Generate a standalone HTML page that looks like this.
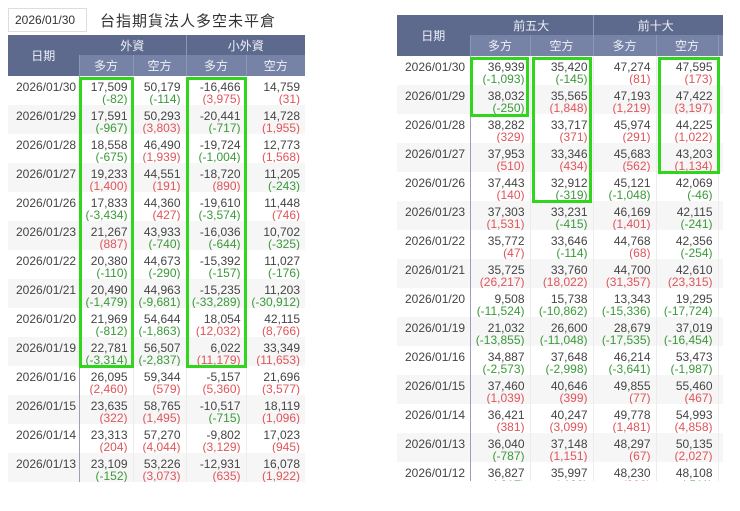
<!DOCTYPE html>
<html><head><meta charset="utf-8">
<style>
*{margin:0;padding:0;box-sizing:border-box}
body{width:740px;height:511px;background:#fff;position:relative;overflow:hidden;font-family:"Liberation Sans","Noto Sans CJK TC",sans-serif;color:#444}
table{border-collapse:collapse;table-layout:fixed;position:absolute;font-size:12px}
th{color:#eef0f6;font-weight:normal;font-size:12px;text-align:center;padding:0}
tr.h1 th{background:#5d6a8e;height:20px}
tr.h2 th{background:#7683a6;height:21px;border-left:1px solid #8c97b6}
th.d{background:#5d6a8e}
td{height:29px;vertical-align:top;padding:5px 5px 0 0;text-align:right;line-height:12px;border-left:1px solid #ececec;white-space:nowrap;overflow:hidden}
td.d{text-align:left;padding-left:8px;border-left:none;border-right:1px solid #9aa0bb}
tr.g td{background:#f6f6f7}
.r{color:#e0555a}.n{color:#3a9a38}
.box{position:absolute;border:3px solid #2fd61c}
.inp{position:absolute;left:8px;top:8px;width:79px;height:24px;border:1px solid #ddd;font-size:12px;padding:4px 0 0 6px;color:#333}
.tt{position:absolute;left:100px;top:10px;font-size:15px;color:#333;letter-spacing:1px}
</style></head><body>
<div class="inp">2026/01/30</div>
<div class="tt">台指期貨法人多空未平倉</div>

<table style="left:8px;top:35px;width:297px">
<colgroup><col style="width:71px"><col style="width:54px"><col style="width:53px"><col style="width:60px"><col style="width:59px"></colgroup>
<tr class="h1"><th class="d" rowspan="2">日期</th><th colspan="2">外資</th><th colspan="2" style="border-left:1px solid #8c97b6">小外資</th></tr>
<tr class="h2"><th>多方</th><th>空方</th><th>多方</th><th>空方</th></tr>
<tr><td class="d">2026/01/30</td><td>17,509<br><span class="n">(-82)</span></td><td>50,179<br><span class="n">(-114)</span></td><td>-16,466<br><span class="r">(3,975)</span></td><td>14,759<br><span class="r">(31)</span></td></tr>
<tr class="g"><td class="d">2026/01/29</td><td>17,591<br><span class="n">(-967)</span></td><td>50,293<br><span class="r">(3,803)</span></td><td>-20,441<br><span class="n">(-717)</span></td><td>14,728<br><span class="r">(1,955)</span></td></tr>
<tr><td class="d">2026/01/28</td><td>18,558<br><span class="n">(-675)</span></td><td>46,490<br><span class="r">(1,939)</span></td><td>-19,724<br><span class="n">(-1,004)</span></td><td>12,773<br><span class="r">(1,568)</span></td></tr>
<tr class="g"><td class="d">2026/01/27</td><td>19,233<br><span class="r">(1,400)</span></td><td>44,551<br><span class="r">(191)</span></td><td>-18,720<br><span class="r">(890)</span></td><td>11,205<br><span class="n">(-243)</span></td></tr>
<tr><td class="d">2026/01/26</td><td>17,833<br><span class="n">(-3,434)</span></td><td>44,360<br><span class="r">(427)</span></td><td>-19,610<br><span class="n">(-3,574)</span></td><td>11,448<br><span class="r">(746)</span></td></tr>
<tr class="g"><td class="d">2026/01/23</td><td>21,267<br><span class="r">(887)</span></td><td>43,933<br><span class="n">(-740)</span></td><td>-16,036<br><span class="n">(-644)</span></td><td>10,702<br><span class="n">(-325)</span></td></tr>
<tr><td class="d">2026/01/22</td><td>20,380<br><span class="n">(-110)</span></td><td>44,673<br><span class="n">(-290)</span></td><td>-15,392<br><span class="n">(-157)</span></td><td>11,027<br><span class="n">(-176)</span></td></tr>
<tr class="g"><td class="d">2026/01/21</td><td>20,490<br><span class="n">(-1,479)</span></td><td>44,963<br><span class="n">(-9,681)</span></td><td>-15,235<br><span class="n">(-33,289)</span></td><td>11,203<br><span class="n">(-30,912)</span></td></tr>
<tr><td class="d">2026/01/20</td><td>21,969<br><span class="n">(-812)</span></td><td>54,644<br><span class="n">(-1,863)</span></td><td>18,054<br><span class="r">(12,032)</span></td><td>42,115<br><span class="r">(8,766)</span></td></tr>
<tr class="g"><td class="d">2026/01/19</td><td>22,781<br><span class="n">(-3,314)</span></td><td>56,507<br><span class="n">(-2,837)</span></td><td>6,022<br><span class="r">(11,179)</span></td><td>33,349<br><span class="r">(11,653)</span></td></tr>
<tr><td class="d">2026/01/16</td><td>26,095<br><span class="r">(2,460)</span></td><td>59,344<br><span class="r">(579)</span></td><td>-5,157<br><span class="r">(5,360)</span></td><td>21,696<br><span class="r">(3,577)</span></td></tr>
<tr class="g"><td class="d">2026/01/15</td><td>23,635<br><span class="r">(322)</span></td><td>58,765<br><span class="r">(1,495)</span></td><td>-10,517<br><span class="n">(-715)</span></td><td>18,119<br><span class="r">(1,096)</span></td></tr>
<tr><td class="d">2026/01/14</td><td>23,313<br><span class="r">(204)</span></td><td>57,270<br><span class="r">(4,044)</span></td><td>-9,802<br><span class="r">(3,129)</span></td><td>17,023<br><span class="r">(945)</span></td></tr>
<tr class="g"><td class="d">2026/01/13</td><td>23,109<br><span class="n">(-152)</span></td><td>53,226<br><span class="r">(3,073)</span></td><td>-12,931<br><span class="r">(635)</span></td><td>16,078<br><span class="r">(1,922)</span></td></tr>
</table>

<div style="position:absolute;left:397px;top:15px;width:326px;height:466px;overflow:hidden">
<table style="left:0;top:0;width:326px">
<colgroup><col style="width:73px"><col style="width:60px"><col style="width:63px"><col style="width:63px"><col style="width:62px"><col style="width:5px"></colgroup>
<tr class="h1"><th class="d" rowspan="2">日期</th><th colspan="2">前五大</th><th colspan="2" style="border-left:1px solid #8c97b6">前十大</th><th style="background:#5d6a8e"></th></tr>
<tr class="h2"><th>多方</th><th>空方</th><th>多方</th><th>空方</th><th></th></tr>
<tr><td class="d">2026/01/30</td><td>36,939<br><span class="n">(-1,093)</span></td><td>35,420<br><span class="n">(-145)</span></td><td>47,274<br><span class="r">(81)</span></td><td>47,595<br><span class="r">(173)</span></td><td></td></tr>
<tr class="g"><td class="d">2026/01/29</td><td>38,032<br><span class="n">(-250)</span></td><td>35,565<br><span class="r">(1,848)</span></td><td>47,193<br><span class="r">(1,219)</span></td><td>47,422<br><span class="r">(3,197)</span></td><td></td></tr>
<tr><td class="d">2026/01/28</td><td>38,282<br><span class="r">(329)</span></td><td>33,717<br><span class="r">(371)</span></td><td>45,974<br><span class="r">(291)</span></td><td>44,225<br><span class="r">(1,022)</span></td><td></td></tr>
<tr class="g"><td class="d">2026/01/27</td><td>37,953<br><span class="r">(510)</span></td><td>33,346<br><span class="r">(434)</span></td><td>45,683<br><span class="r">(562)</span></td><td>43,203<br><span class="r">(1,134)</span></td><td></td></tr>
<tr><td class="d">2026/01/26</td><td>37,443<br><span class="r">(140)</span></td><td>32,912<br><span class="n">(-319)</span></td><td>45,121<br><span class="n">(-1,048)</span></td><td>42,069<br><span class="n">(-46)</span></td><td></td></tr>
<tr class="g"><td class="d">2026/01/23</td><td>37,303<br><span class="r">(1,531)</span></td><td>33,231<br><span class="n">(-415)</span></td><td>46,169<br><span class="r">(1,401)</span></td><td>42,115<br><span class="n">(-241)</span></td><td></td></tr>
<tr><td class="d">2026/01/22</td><td>35,772<br><span class="r">(47)</span></td><td>33,646<br><span class="n">(-114)</span></td><td>44,768<br><span class="r">(68)</span></td><td>42,356<br><span class="n">(-254)</span></td><td></td></tr>
<tr class="g"><td class="d">2026/01/21</td><td>35,725<br><span class="r">(26,217)</span></td><td>33,760<br><span class="r">(18,022)</span></td><td>44,700<br><span class="r">(31,357)</span></td><td>42,610<br><span class="r">(23,315)</span></td><td></td></tr>
<tr><td class="d">2026/01/20</td><td>9,508<br><span class="n">(-11,524)</span></td><td>15,738<br><span class="n">(-10,862)</span></td><td>13,343<br><span class="n">(-15,336)</span></td><td>19,295<br><span class="n">(-17,724)</span></td><td></td></tr>
<tr class="g"><td class="d">2026/01/19</td><td>21,032<br><span class="n">(-13,855)</span></td><td>26,600<br><span class="n">(-11,048)</span></td><td>28,679<br><span class="n">(-17,535)</span></td><td>37,019<br><span class="n">(-16,454)</span></td><td></td></tr>
<tr><td class="d">2026/01/16</td><td>34,887<br><span class="n">(-2,573)</span></td><td>37,648<br><span class="n">(-2,998)</span></td><td>46,214<br><span class="n">(-3,641)</span></td><td>53,473<br><span class="n">(-1,987)</span></td><td></td></tr>
<tr class="g"><td class="d">2026/01/15</td><td>37,460<br><span class="r">(1,039)</span></td><td>40,646<br><span class="r">(399)</span></td><td>49,855<br><span class="r">(77)</span></td><td>55,460<br><span class="r">(467)</span></td><td></td></tr>
<tr><td class="d">2026/01/14</td><td>36,421<br><span class="r">(381)</span></td><td>40,247<br><span class="r">(3,099)</span></td><td>49,778<br><span class="r">(1,481)</span></td><td>54,993<br><span class="r">(4,858)</span></td><td></td></tr>
<tr class="g"><td class="d">2026/01/13</td><td>36,040<br><span class="n">(-787)</span></td><td>37,148<br><span class="r">(1,151)</span></td><td>48,297<br><span class="r">(67)</span></td><td>50,135<br><span class="r">(2,027)</span></td><td></td></tr>
<tr><td class="d">2026/01/12</td><td>36,827<br><span class="n">(-817)</span></td><td>35,997<br><span class="n">(-180)</span></td><td>48,230<br><span class="r">(322)</span></td><td>48,108<br><span class="n">(-511)</span></td><td></td></tr>
</table>
</div>

<div class="box" style="left:79px;top:77px;width:55px;height:291px"></div>
<div class="box" style="left:186px;top:77px;width:61px;height:291px"></div>
<div class="box" style="left:470px;top:57px;width:59px;height:60px"></div>
<div class="box" style="left:532px;top:57px;width:60px;height:146px"></div>
<div class="box" style="left:658px;top:57px;width:62px;height:117px"></div>
</body></html>
